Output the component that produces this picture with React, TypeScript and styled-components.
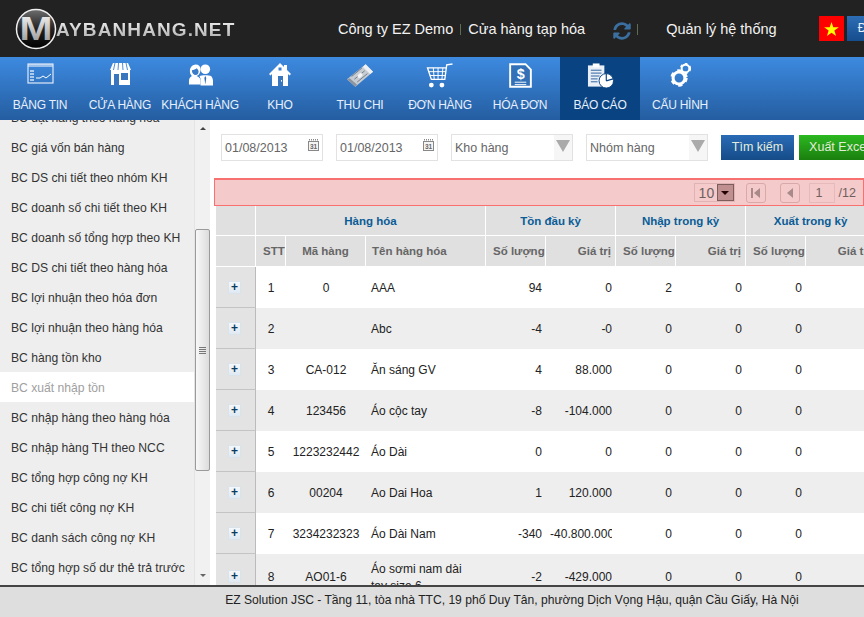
import React from "react";
import styled, { createGlobalStyle } from "styled-components";
import { FaSyncAlt } from "react-icons/fa";

const Global = createGlobalStyle`
  html, body { margin: 0; padding: 0; height: 100%; overflow: hidden; background: #fff; }
  * { box-sizing: border-box; }
  body { font-family: "Liberation Sans", Arial, sans-serif; font-size: 12px; color: #222; }
`;

const Page = styled.div`
  width: 864px; height: 617px; display: flex; flex-direction: column; overflow: hidden;
`;
const Header = styled.header`
  height: 57px; flex: none; background: #222; display: flex; align-items: center; color: #f2f2f2; overflow: hidden;
`;
const LogoBlock = styled.div`
  width: 338px; flex: none; display: flex; align-items: center; padding-left: 15px; height: 57px;
`;
const LogoText = styled.span`
  font-size: 19px; font-weight: bold; letter-spacing: 1.1px; margin-left: -1px; margin-top: 2px;
  background: linear-gradient(#f4f4f4, #a8a8a8); -webkit-background-clip: text; background-clip: text; color: transparent;
`;
const HeadLink = styled.span<{ $ml?: number }>`
  flex: none; font-size: 14.5px; line-height: 20px; white-space: nowrap; margin-left: ${p => p.$ml ?? 0}px; margin-top: 1px;
`;
const Sep = styled.i<{ $ml: number }>`
  display: block; flex: none; width: 1px; height: 11px; background: #5d6d4f; margin-left: ${p => p.$ml}px; margin-top: 1px;
`;
const SyncWrap = styled.span`
  display: flex; flex: none; margin-left: 28px; margin-top: 4px; color: #3b6f9f;
`;
const Flag = styled.span`
  width: 25px; height: 25px; flex: none; background: #f00; margin-left: 42px; display: flex; align-items: center; justify-content: center;
`;
const LogoutBtn = styled.span`
  width: 80px; height: 25px; flex: none; margin-left: 3px; padding-left: 11px; line-height: 25px; font-size: 12px;
  color: #eaf2fb; background: linear-gradient(#2d6db5, #164d8d);
`;

const Nav = styled.nav`
  height: 63px; flex: none; display: flex; background: linear-gradient(#3d8ae0, #245da0);
`;
const NavItem = styled.div<{ $active?: boolean }>`
  width: 80px; height: 63px; display: flex; flex-direction: column; align-items: center; padding-top: 6px;
  color: #e6effa; font-size: 12px; letter-spacing: -0.25px; white-space: nowrap; background: ${p => (p.$active ? "#0a4382" : "transparent")};
`;
const NavIcon = styled.span`
  height: 30px; display: flex; align-items: flex-start; justify-content: center;
`;
const NavLabel = styled.span`
  line-height: 15px; margin-top: 5px;
`;

const Content = styled.div`
  height: 465px; flex: none; display: flex; overflow: hidden;
`;
const Sidebar = styled.aside`
  width: 210px; flex: none; display: flex; background: #fff; overflow: hidden;
`;
const MenuList = styled.ul`
  list-style: none; margin: -18px 0 0; padding: 0; width: 194px; flex: none; background: #eee;
`;
const MenuItem = styled.li<{ $active?: boolean }>`
  height: 30px; line-height: 32px; padding-left: 11px; font-size: 12.15px; white-space: nowrap;
  color: ${p => (p.$active ? "#a0a0a0" : "#333")}; background: ${p => (p.$active ? "#fff" : "#eee")};
`;
const Scrollbar = styled.div`
  width: 16px; flex: none; background: #f1f1f1; border-left: 1px solid #e4e4e4; display: flex; flex-direction: column; align-items: center;
`;
const ScrollArrow = styled.div<{ $down?: boolean }>`
  width: 0; height: 0; border-left: 3px solid transparent; border-right: 3px solid transparent;
  ${p => (p.$down ? "border-top: 3px solid #666; margin-top: 103px;" : "border-bottom: 3px solid #444; margin-top: 7px;")}
`;
const ScrollThumb = styled.div`
  width: 15px; height: 242px; margin-top: 99px; border: 1px solid #9a9a9a; border-radius: 2px;
  background: linear-gradient(90deg, #f8f8f8, #dcdcdc); display: flex; align-items: center; justify-content: center;
`;
const Grip = styled.div`
  width: 7px; height: 7px; background: repeating-linear-gradient(#777 0 1px, transparent 1px 2px);
`;

const Main = styled.main`
  flex: 1; min-width: 0; overflow: hidden; padding-left: 4px;
`;
const Filters = styled.div`
  display: flex; padding: 14px 0 0 7px; height: 44px;
`;
const Field = styled.div<{ $w: number; $ml?: number }>`
  width: ${p => p.$w}px; height: 27px; flex: none; border: 1px solid #e2e2e2; background: #fff; margin-left: ${p => p.$ml ?? 0}px;
  display: flex; align-items: center; padding-left: 3px; color: #666; font-size: 12.5px; justify-content: space-between; overflow: hidden;
`;
const FieldArrow = styled.span`
  width: 18px; height: 25px; background: #f6f6f6; display: flex; justify-content: center; padding-top: 5px;
`;
const Tri = styled.i`
  display: block; width: 0; height: 0; border-left: 7px solid transparent; border-right: 7px solid transparent; border-top: 12px solid #aaa;
`;
const Cal = styled.span`
  display: flex; margin: -6px 3px 0 0;
`;
const ActionBtn = styled.div<{ $green?: boolean; $ml: number; $w: number }>`
  width: ${p => p.$w}px; height: 25px; flex: none; margin: 1px 0 0 ${p => p.$ml}px; line-height: 25px; text-align: center; font-size: 12.5px; color: #e4edda; white-space: nowrap;
  background: ${p => (p.$green ? "linear-gradient(#2cb820, #1a7f0e)" : "linear-gradient(#2a6bb6, #154c88)")};
`;
const AlertBar = styled.div`
  margin-top: 14px; height: 28px; background: #f5caca; border: 1px solid #f87070; border-width: 2px 1px 1px 1px; display: flex; align-items: center; justify-content: flex-end; padding: 0 7px 0 0; color: #7d6a6a;
`;
const PageSize = styled.div`
  width: 41px; height: 19px; border: 1px solid #e0b4b4; display: flex; justify-content: space-between; align-items: center; font-size: 14px; padding-left: 4px; color: #6e6060;
`;
const PageSizeBtn = styled.span`
  width: 17px; height: 17px; background: #c09090; border: 1px solid #7d5c5c; display: flex; align-items: center; justify-content: center;
`;
const Caret = styled.i`
  display: block; width: 0; height: 0; border-left: 4px solid transparent; border-right: 4px solid transparent; border-top: 4px solid #200;
`;
const PageBtn = styled.span<{ $ml: number }>`
  width: 20px; height: 20px; margin-left: ${p => p.$ml}px; border: 1px solid #d9a9a9; border-radius: 3px; display: flex; align-items: center; justify-content: center;
`;
const PageInput = styled.span`
  width: 26px; height: 20px; margin-left: 9px; border: 1px solid #e6baba; font-size: 12.5px; padding-left: 6px; line-height: 18px; color: #6e6060;
`;
const PageTotal = styled.span`
  margin-left: 4px; font-size: 12.5px; color: #6e6060;
`;

const Table = styled.table`
  table-layout: fixed; width: 730px; margin-left: 2px; border-collapse: separate; border-spacing: 0;
`;
const Th = styled.th<{ $align?: string; $blue?: boolean }>`
  height: ${p => (p.$blue ? 30 : 31)}px; padding: 0 4px; overflow: hidden; white-space: nowrap; background: #e0e0e0; font-size: 11.5px; font-weight: bold;
  text-align: ${p => p.$align ?? "center"}; color: ${p => (p.$blue ? "#0a5c96" : "#666")};
  border-right: 1px solid #fff; border-bottom: 1px solid #fff;
`;
const SideTh = styled(Th)`
  padding: 0;
`;
const NameTh = styled(Th)`
  padding: 0 0 0 6px;
`;
const TightTh = styled(Th)`
  padding: 0 0 0 7px; text-align: left;
`;
const Tr = styled.tr<{ $odd: boolean; $tall?: boolean }>`
  height: ${p => (p.$tall ? 46 : 41)}px; background: ${p => (p.$odd ? "#fff" : "#eee")};
`;
const ExpandTd = styled.td`
  background: #e3e3e3; border-right: 1px solid #bbb; border-bottom: 1px solid #c4c4c4; padding: 0; padding-left: 12px;
`;
const ExpandBtn = styled.div`
  width: 13px; height: 13px; background: linear-gradient(#f4f8fc, #dfe9f3); border: 1px solid #dbe3ea; color: #0c3b5f; font-size: 12px; font-weight: bold; line-height: 10px; text-align: center;
`;
const Td = styled.td<{ $align?: string }>`
  padding: 0 4px; font-size: 12px; color: #222; text-align: ${p => p.$align ?? "right"}; overflow: hidden;
`;
const NameTd = styled(Td)`
  padding: 2px 20px 0 5px; text-align: left; line-height: 17px;
`;
const Clip = styled.div`
  white-space: nowrap; overflow: hidden;
`;

const Footer = styled.footer`
  height: 32px; flex: none; background: #dedede; border-top: 2px solid #444; overflow: hidden; line-height: 26px;
`;
const FooterText = styled.div`
  width: 1024px; text-align: center; font-size: 12.1px; color: #222; white-space: nowrap;
`;

const menu = [
  "BC đặt hàng theo hàng hóa", "BC giá vốn bán hàng", "BC DS chi tiết theo nhóm KH", "BC doanh số chi tiết theo KH",
  "BC doanh số tổng hợp theo KH", "BC DS chi tiết theo hàng hóa", "BC lợi nhuận theo hóa đơn", "BC lợi nhuận theo hàng hóa",
  "BC hàng tồn kho", "BC xuất nhập tồn", "BC nhập hàng theo hàng hóa", "BC nhập hàng TH theo NCC", "BC tổng hợp công nợ KH",
  "BC chi tiết công nợ KH", "BC danh sách công nợ KH", "BC tổng hợp số dư thẻ trả trước", "BC khác",
];

const rows: [string, string, string, string, string, string][] = [
  ["1", "0", "AAA", "94", "0", "2"],
  ["2", "", "Abc", "-4", "-0", "0"],
  ["3", "CA-012", "Ăn sáng GV", "4", "88.000", "0"],
  ["4", "123456", "Áo cộc tay", "-8", "-104.000", "0"],
  ["5", "1223232442", "Áo Dài", "0", "0", "0"],
  ["6", "00204", "Ao Dai Hoa", "1", "120.000", "0"],
  ["7", "3234232323", "Áo Dài Nam", "-340", "-40.800.000", "0"],
  ["8", "AO01-6", "Áo sơmi nam dài tay size 6", "-2", "-429.000", "0"],
];

const colWidths = [40, 30, 80, 120, 60, 70, 60, 70, 60, 70, 70];

const W = "#fff";
const IconBoard = () => (
  <svg width="27" height="21" viewBox="0 0 27 21" fill="none">
    <rect x="1" y="1" width="25" height="19" stroke="#dfe9f7" strokeWidth="1.2" />
    <rect x="1" y="1" width="25" height="3" fill="#dfe9f7" opacity=".6" />
    <path d="M3 8h4M3 11h4M3 14h4M3 17h4" stroke={W} strokeWidth="1.5" opacity=".8" />
    <path d="M9 15h4l3-2 3 2 5-4" stroke={W} strokeWidth="1" />
  </svg>
);
const IconStore = () => (
  <svg width="21" height="22" viewBox="0 0 21 22" fill="none">
    <path d="M3 0h15l3 7H0z" fill={W} />
    <path d="M5 0 3.500 7M8.500 0 8 7M12.500 0l.5 7M16 0l1.500 7" stroke="#4d8ed6" strokeWidth="1" />
    <path d="M1 7h19v15H1z" fill={W} />
    <rect x="4" y="11" width="5" height="11" fill="#3a76bd" />
    <rect x="11" y="10" width="7" height="7" fill="#3a76bd" />
  </svg>
);
const IconPeople = () => (
  <svg width="25" height="24" viewBox="0 0 26 24" fill="none">
    <path d="M8 1c3 0 5 2 5 5 0 3-1 6-4 7 3 1 4 3 4 5v4H1v-4c0-2 1-4 3-5C2 11 2 9 2 7c0-3 3-6 6-6z" fill={W} />
    <path d="M4 7c2 0 4-1 5-2 1 1 2 2 2 3 0 2-1 4-3 4S4 10 4 7z" fill="#3a7cc7" />
    <circle cx="18" cy="6" r="5" fill={W} />
    <path d="M12 13c2-1 10-1 12 0 1 1 2 3 2 5v5H13v-7z" fill={W} />
    <path d="M18 13l-1 2 1 7 1-7z" fill="#2e6cb4" />
  </svg>
);
const IconHouse = () => (
  <svg width="22" height="24" viewBox="0 0 22 24">
    <path d="M11 0 0 11l1.500 1.500L3 11v12h16V11l1.500 1.500L22 11l-4-4V2h-3v2z" fill={W} />
    <rect x="9.500" y="4.500" width="3" height="3" fill="#3d80cc" />
    <rect x="9" y="13" width="5" height="10" fill="#3a76bd" />
    <rect x="12" y="17" width="1" height="1.600" fill={W} />
  </svg>
);
const IconMoney = () => (
  <svg width="28" height="25" viewBox="0 0 30 26" fill="none">
    <path d="M1 17 21 1l8 8-19 16z" fill="#c6ccd2" />
    <path d="M21 1l8 8-3 2.500L18 4z" fill="#eef1f4" />
    <path d="M1 17l3-1 8 7-2 2z" fill="#8d96a0" />
    <path d="M6 14 17 5M9 17l11-9M12 20l11-9" stroke="#6f7a86" strokeWidth="1" />
    <ellipse cx="15" cy="13" rx="3" ry="2" fill="#f2f4f6" transform="rotate(-38 15 13)" />
  </svg>
);
const IconCart = () => (
  <svg width="28" height="25" viewBox="0 0 28 26" fill="none">
    <path d="M27 1 21 2l-2 15H5L1 5h20" stroke={W} strokeWidth="1.400" />
    <path d="M2 9h18M3.500 13h16M7 5l1 12M12 5v12M17 5l-1 12" stroke={W} strokeWidth="1" />
    <circle cx="5" cy="23" r="2.500" fill={W} />
    <circle cx="16" cy="23" r="2.500" fill={W} />
  </svg>
);
const IconDoc = () => (
  <svg width="23" height="25" viewBox="0 0 24 26" fill="none">
    <path d="M1.200 1.200h16l5.600 5.600v18H1.200z" stroke={W} strokeWidth="2" fill="#3271b8" />
    <path d="M6 20h12M6 22.500h12" stroke={W} />
    <text x="12" y="17" textAnchor="middle" fontSize="15" fontWeight="bold" fill={W} fontFamily="Liberation Sans">$</text>
  </svg>
);
const IconReport = () => (
  <svg width="27" height="26" viewBox="0 0 28 26" fill="none">
    <rect x="1" y="2" width="17" height="22" fill="#e9eff7" />
    <rect x="6" y="0" width="7" height="4" fill={W} />
    <path d="M4 7h11M4 10h11M4 13h9M4 16h7M4 19h7" stroke="#2a5f9e" strokeWidth="1" />
    <circle cx="20" cy="18" r="7.500" fill={W} stroke="#0a4382" />
    <path d="M20 18V10.500M20 18l7-2" stroke="#0a4382" strokeWidth="1.200" />
  </svg>
);
const Gear = ({ cx, cy, r }: { cx: number; cy: number; r: number }) => (
  <g>
    <circle cx={cx} cy={cy} r={r * 0.7} fill="none" stroke={W} strokeWidth={r * 0.36} />
    <circle cx={cx} cy={cy} r={r * 0.9} fill="none" stroke={W} strokeWidth={r * 0.24} strokeDasharray={`${r * 0.5} ${r * 0.5}`} />
  </g>
);
const IconGears = () => (
  <svg width="21" height="24" viewBox="0 0 21 24">
    <Gear cx={9} cy={15} r={8.500} />
    <Gear cx={15.500} cy={5.500} r={5.500} />
  </svg>
);
const Star = () => (
  <svg width="15" height="14" viewBox="0 0 20 19">
    <path d="M10 0l2.400 7.100H20l-6.100 4.500 2.300 7.300L10 14.500 3.800 18.900l2.300-7.300L0 7.100h7.600z" fill="#ff0" />
  </svg>
);
const CalIcon = () => (
  <svg width="11" height="13" viewBox="0 0 11 13" fill="none">
    <path d="M1 1.500h9M1 3h9" stroke="#888" strokeDasharray="1 1" />
    <rect x=".5" y="3.500" width="10" height="9" stroke="#888" fill="#f4f4f4" />
    <text x="5.500" y="11" textAnchor="middle" fontSize="6.500" fontFamily="Liberation Sans" fontWeight="bold" fill="#666">31</text>
  </svg>
);
const First = () => (
  <svg width="12" height="12" viewBox="0 0 12 12"><path d="M1 1h2v10H1zM10 1v10L4 6z" fill="#a88a8a" /></svg>
);
const Prev = () => (
  <svg width="12" height="12" viewBox="0 0 12 12"><path d="M9 1v10L3 6z" fill="#a88a8a" /></svg>
);
const LogoMark = () => (
  <svg width="42" height="42" viewBox="0 0 42 42">
    <defs>
      <linearGradient id="disc" x1="0" y1="0" x2="0" y2="1">
        <stop offset="0" stopColor="#6e6e6e" />
        <stop offset=".5" stopColor="#222" />
        <stop offset="1" stopColor="#000" />
      </linearGradient>
      <linearGradient id="mfill" x1="0" y1="0" x2="0" y2="1">
        <stop offset="0" stopColor="#fff" />
        <stop offset="1" stopColor="#8c8c8c" />
      </linearGradient>
    </defs>
    <circle cx="21" cy="21" r="19.500" fill="url(#disc)" stroke="#f0f0f0" strokeWidth="1.500" />
    <text x="21" y="32" textAnchor="middle" fontFamily="Liberation Sans" fontWeight="bold" fontSize="33" fill="url(#mfill)" transform="translate(-4.200 0) scale(1.2 1)">M</text>
  </svg>
);

const navs: [string, React.ReactNode, boolean?][] = [
  ["BẢNG TIN", <IconBoard />], ["CỬA HÀNG", <IconStore />], ["KHÁCH HÀNG", <IconPeople />], ["KHO", <IconHouse />],
  ["THU CHI", <IconMoney />], ["ĐƠN HÀNG", <IconCart />], ["HÓA ĐƠN", <IconDoc />], ["BÁO CÁO", <IconReport />, true], ["CẤU HÌNH", <IconGears />],
];

export default function App() {
  return (
    <Page>
      <Global />
      <Header>
        <LogoBlock>
          <LogoMark />
          <LogoText>AYBANHANG.NET</LogoText>
        </LogoBlock>
        <HeadLink>Công ty EZ Demo</HeadLink>
        <Sep $ml={7} />
        <HeadLink $ml={7}>Cửa hàng tạp hóa</HeadLink>
        <SyncWrap><FaSyncAlt size={18} /></SyncWrap>
        <Sep $ml={6} />
        <HeadLink $ml={28}>Quản lý hệ thống</HeadLink>
        <Flag><Star /></Flag>
        <LogoutBtn>Đăng xuất</LogoutBtn>
      </Header>
      <Nav>
        {navs.map(([label, icon, active]) => (
          <NavItem key={label} $active={active}>
            <NavIcon>{icon}</NavIcon>
            <NavLabel>{label}</NavLabel>
          </NavItem>
        ))}
      </Nav>
      <Content>
        <Sidebar>
          <MenuList>
            {menu.map(m => (
              <MenuItem key={m} $active={m === "BC xuất nhập tồn"}>{m}</MenuItem>
            ))}
          </MenuList>
          <Scrollbar>
            <ScrollArrow />
            <ScrollThumb><Grip /></ScrollThumb>
            <ScrollArrow $down />
          </Scrollbar>
        </Sidebar>
        <Main>
          <Filters>
            <Field $w={102}>01/08/2013<Cal><CalIcon /></Cal></Field>
            <Field $w={102} $ml={13}>01/08/2013<Cal><CalIcon /></Cal></Field>
            <Field $w={122} $ml={13}>Kho hàng<FieldArrow><Tri /></FieldArrow></Field>
            <Field $w={122} $ml={13}>Nhóm hàng<FieldArrow><Tri /></FieldArrow></Field>
            <ActionBtn $ml={13} $w={73}>Tìm kiếm</ActionBtn>
            <ActionBtn $green $ml={5} $w={80}>Xuất Excel</ActionBtn>
          </Filters>
          <AlertBar>
            <PageSize>10<PageSizeBtn><Caret /></PageSizeBtn></PageSize>
            <PageBtn $ml={11}><First /></PageBtn>
            <PageBtn $ml={14}><Prev /></PageBtn>
            <PageInput>1</PageInput>
            <PageTotal>/12</PageTotal>
          </AlertBar>
          <Table>
            <colgroup>
              {colWidths.map((w, i) => <col key={i} width={w} />)}
            </colgroup>
            <thead>
              <tr>
                <SideTh $blue />
                <Th $blue colSpan={3}>Hàng hóa</Th>
                <Th $blue colSpan={2}>Tồn đầu kỳ</Th>
                <Th $blue colSpan={2}>Nhập trong kỳ</Th>
                <Th $blue colSpan={2}>Xuất trong kỳ</Th>
                <Th $blue>Tồn</Th>
              </tr>
              <tr>
                <SideTh />
                <TightTh>STT</TightTh>
                <Th>Mã hàng</Th>
                <NameTh $align="left">Tên hàng hóa</NameTh>
                <TightTh>Số lượng</TightTh>
                <Th $align="right">Giá trị</Th>
                <TightTh>Số lượng</TightTh>
                <Th $align="right">Giá trị</Th>
                <TightTh>Số lượng</TightTh>
                <Th $align="right">Giá trị</Th>
                <TightTh>Số lượng</TightTh>
              </tr>
            </thead>
            <tbody>
              {rows.map((r, i) => (
                <Tr key={r[0]} $odd={i % 2 === 0} $tall={i === 7}>
                  <ExpandTd><ExpandBtn>+</ExpandBtn></ExpandTd>
                  <Td $align="center">{r[0]}</Td>
                  <Td $align="center">{r[1]}</Td>
                  <NameTd>{r[2]}</NameTd>
                  <Td>{r[3]}</Td>
                  <Td><Clip>{r[4]}</Clip></Td>
                  <Td>{r[5]}</Td>
                  <Td>0</Td>
                  <Td>0</Td>
                  <Td>0</Td>
                  <Td>0</Td>
                </Tr>
              ))}
            </tbody>
          </Table>
        </Main>
      </Content>
      <Footer>
        <FooterText>EZ Solution JSC - Tầng 11, tòa nhà TTC, 19 phố Duy Tân, phường Dịch Vọng Hậu, quận Cầu Giấy, Hà Nội</FooterText>
      </Footer>
    </Page>
  );
}
